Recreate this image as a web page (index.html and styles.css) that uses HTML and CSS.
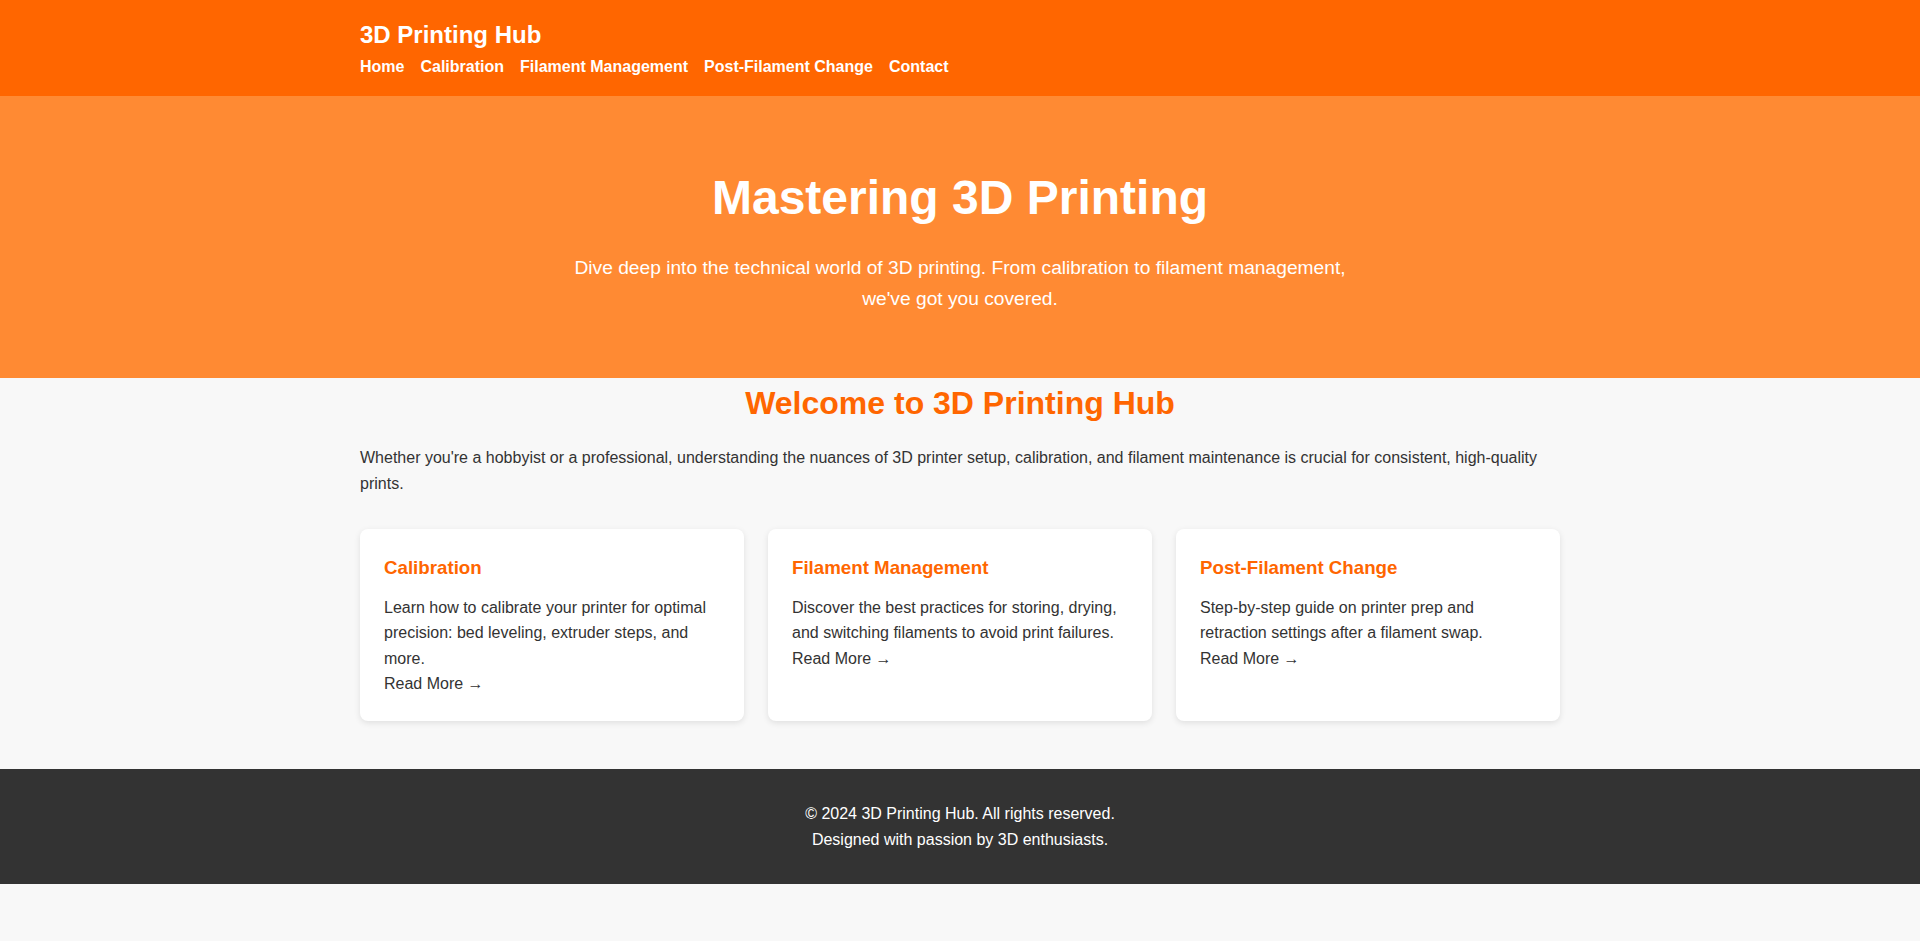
FILE: index.html
```html
<!DOCTYPE html>
<html lang="en">
<head>
<meta charset="utf-8">
<title>3D Printing Hub</title>
<link rel="stylesheet" href="styles.css">
</head>
<body>
<header class="site-header">
  <div class="container">
    <h1 class="brand">3D Printing Hub</h1>
    <nav class="nav">
      <a href="#">Home</a>
      <a href="#">Calibration</a>
      <a href="#">Filament Management</a>
      <a href="#">Post-Filament Change</a>
      <a href="#">Contact</a>
    </nav>
  </div>
</header>
<section class="hero">
  <h1 class="hero-title">Mastering 3D Printing</h1>
  <p class="hero-text">Dive deep into the technical world of 3D printing. From calibration to filament management, we've got you covered.</p>
</section>
<main class="container main">
  <h2 class="welcome">Welcome to 3D Printing Hub</h2>
  <p class="intro">Whether you're a hobbyist or a professional, understanding the nuances of 3D printer setup, calibration, and filament maintenance is crucial for consistent, high-quality prints.</p>
  <div class="cards">
    <article class="card">
      <h3 class="card-title">Calibration</h3>
      <p class="card-text">Learn how to calibrate your printer for optimal precision: bed leveling, extruder steps, and more.</p>
      <a class="more" href="#">Read More &rarr;</a>
    </article>
    <article class="card">
      <h3 class="card-title">Filament Management</h3>
      <p class="card-text">Discover the best practices for storing, drying, and switching filaments to avoid print failures.</p>
      <a class="more" href="#">Read More &rarr;</a>
    </article>
    <article class="card">
      <h3 class="card-title">Post-Filament Change</h3>
      <p class="card-text">Step-by-step guide on printer prep and retraction settings after a filament swap.</p>
      <a class="more" href="#">Read More &rarr;</a>
    </article>
  </div>
</main>
<footer class="site-footer">
  <p>&copy; 2024 3D Printing Hub. All rights reserved.</p>
  <p>Designed with passion by 3D enthusiasts.</p>
</footer>
</body>
</html>
```
FILE: styles.css
```css
* { box-sizing: border-box; }
html, body {
  margin: 0;
  padding: 0;
}
body {
  font-family: "Liberation Sans", Arial, sans-serif;
  font-size: 16px;
  line-height: 1.6;
  color: #333;
  background: #f8f8f8;
}
.container {
  width: 1200px;
  margin: 0 auto;
}
.site-header {
  background: #ff6600;
  color: #fff;
  padding: 16px 0;
}
.brand {
  margin: 0;
  font-size: 24px;
  font-weight: bold;
}
.nav {
  display: flex;
  gap: 16px;
}
.nav a {
  color: #fff;
  text-decoration: none;
  font-weight: bold;
}
.hero {
  background: #ff8a33;
  color: #fff;
  text-align: center;
  padding: 64px 32px;
}
.hero-title {
  margin: 0 0 16px;
  font-size: 48px;
  font-weight: bold;
}
.hero-text {
  margin: 0 auto;
  max-width: 800px;
  font-size: 19.2px;
}
.main {
  padding-bottom: 48px;
}
.welcome {
  margin: 0 0 16px;
  text-align: center;
  color: #ff6600;
  font-size: 32px;
}
.intro {
  margin: 0 0 32px;
}
.cards {
  display: grid;
  grid-template-columns: repeat(3, 1fr);
  gap: 24px;
}
.card {
  background: #fff;
  border-radius: 8px;
  padding: 24px;
  box-shadow: 0 2px 6px rgba(0, 0, 0, 0.1);
}
.card-title {
  margin: 0 0 12px;
  color: #ff6600;
  font-size: 18.72px;
}
.card-text {
  margin: 0;
}
.more {
  display: block;
  color: #333;
  text-decoration: none;
}
.site-footer {
  background: #333;
  color: #fff;
  text-align: center;
  padding: 32px 0;
}
.site-footer p {
  margin: 0;
}
```
